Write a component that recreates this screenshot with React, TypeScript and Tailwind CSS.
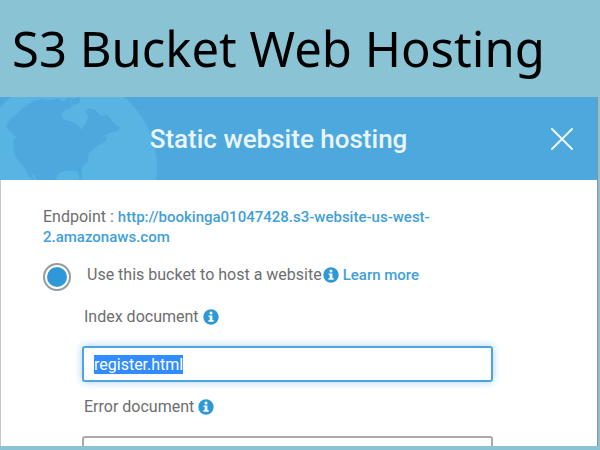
import { useEffect, useRef } from "react";

function InfoIcon() {
  return (
    <svg viewBox="0 0 16 16" className="size-4 shrink-0" aria-hidden="true">
      <circle cx="8" cy="8" r="7.7" fill="#2f99d8" />
      <circle cx="8" cy="4" r="1.5" fill="#fff" />
      <path d="M5.6 6.5h3.8v4.6h1.2v1.7H5.5v-1.7h1.2V8.1H5.6z" fill="#fff" />
    </svg>
  );
}

function Globe() {
  return (
    <svg
      viewBox="0 0 160 83"
      className="absolute top-0 left-0 h-full w-40"
      preserveAspectRatio="xMinYMin slice"
      aria-hidden="true"
    >
      <circle cx="64" cy="71" r="93" fill="#57b4e3" />
      <g fill="#4da8dd" stroke="#4da8dd" strokeWidth="1" strokeLinejoin="round">
        <path d="M42 2L33 5L24 11L17 17L11 22L7 28L9 33L15 38L17 40L14 43L14 52L16 60L21 66L26 72L29 78L33 83L31 76L29 70L33 76L38 83L55 83L57 78L60 75L66 73L74 73L78 74L80 82L82 82L81 75L81 70L87 65L88 57L93 52L97 49L102 46L106 43L106 40L100 41L106 37L111 35L116 34L120 31L115 28L111 23L107 18L103 20L98 17L95 13L88 12L86 15L89 20L86 27L83 31L81 33L77 28L71 25L64 23L61 19L64 13L70 11L71 8L79 5L79 0L74 3L68 1L64 5L58 2L48 4z" />
        <path d="M0 0h10L4 6L0 10z" />
        <path d="M75 2l5 2-3 3-4-2z" />
      </g>
    </svg>
  );
}

export default function App() {
  const indexField = useRef<HTMLInputElement>(null);

  useEffect(() => {
    indexField.current?.focus();
    indexField.current?.select();
  }, []);

  return (
    <main className="h-screen overflow-hidden bg-[#8ac4d4] pb-1 font-[Roboto,'Liberation_Sans',sans-serif] text-[#6c6e6f]">
      <div className="flex h-full flex-col">
        <h1 className="h-[97px] shrink-0 pl-3 font-['Noto_Sans','Open_Sans',sans-serif] text-[49px] leading-[97px] whitespace-nowrap text-black">
          S3 Bucket Web Hosting
        </h1>

        <section className="mr-0.5 flex min-h-0 flex-1 flex-col overflow-hidden border-r border-[#8d8f90] bg-white">
          <header className="relative flex h-[83px] shrink-0 items-center justify-center bg-[#4da8dd] pr-10">
            <Globe />
            <h2 className="relative text-[26px] leading-8 font-medium text-[#eaf5fb]">Static website hosting</h2>
            <button type="button" aria-label="Close" className="absolute right-6">
              <svg viewBox="0 0 22 22" className="size-[22px]" stroke="#eef7fc" strokeWidth="2" strokeLinecap="round">
                <path d="M1 1l20 20M21 1L1 21" />
              </svg>
            </button>
          </header>

          <div className="flex min-h-0 flex-1 flex-col border-l border-[#c4c8ca] pt-[27px] pl-[42px] text-base leading-5">
            <p>
              Endpoint :{" "}
              <a href="#endpoint" className="text-[15px] font-medium text-[#3f9fda]">
                http://bookinga01047428.s3-website-us-west-
                <br />
                2.amazonaws.com
              </a>
            </p>

            <div className="mt-4 flex h-7 items-center">
              <input
                id="host"
                type="radio"
                name="mode"
                defaultChecked
                className="size-7 shrink-0 appearance-none rounded-full border-2 border-[#959b9e] bg-[#2f98d8] bg-clip-content p-0.5"
              />
              <label htmlFor="host" className="ml-4 pb-1">
                Use this bucket to host a website
              </label>
              <span className="ml-px pb-1">
                <InfoIcon />
              </span>
              <a href="#learn" className="ml-1 pb-1 text-[15px] font-medium text-[#3f9fda]">
                Learn more
              </a>
            </div>

            <div className="mt-4 mr-[104px] ml-[39px] flex flex-col">
              <div className="flex items-center gap-1 pl-0.5">
                <label htmlFor="index">Index document</label>
                <InfoIcon />
              </div>
              <input
                ref={indexField}
                id="index"
                type="text"
                defaultValue="register.html"
                className="mt-[19px] h-9 w-full rounded-[3px] border-2 border-[#4ba6dd] bg-white px-2.5 shadow-[0_0_9px_#a9cff5] outline-none selection:bg-[#308cff] selection:text-white"
              />
              <div className="mt-[15px] flex items-center gap-1 pl-0.5">
                <label htmlFor="error">Error document</label>
                <InfoIcon />
              </div>
              <input
                id="error"
                type="text"
                className="mt-[19px] h-9 w-full rounded-[3px] border-2 border-[#a7abab] bg-white px-2.5 outline-none"
              />
            </div>
          </div>
        </section>
      </div>
    </main>
  );
}
